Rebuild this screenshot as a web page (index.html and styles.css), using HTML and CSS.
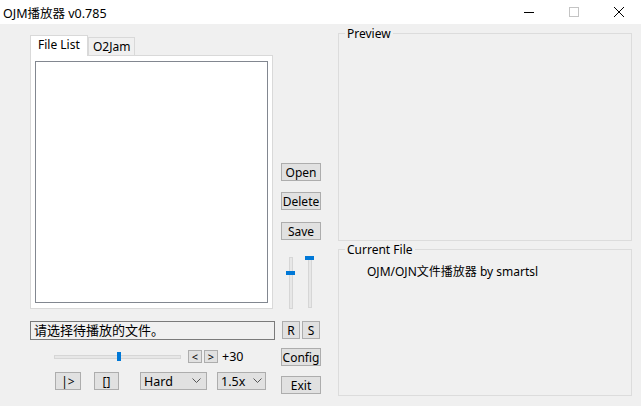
FILE: index.html
```html
<!DOCTYPE html>
<html lang="zh-CN">
<head>
    <meta charset="UTF-8">
    <title>OJM播放器 v0.785</title>
    <link rel="stylesheet" href="styles.css">
</head>
<body>
    <div class="window">
        <div class="titlebar">
            <span class="title">OJM播放器 v0.785</span>
            <div class="controls">
                <span class="ctl"><svg width="10" height="10" viewBox="0 0 10 10"><path d="M0 5.5H10" stroke="#000" stroke-width="1"/></svg></span>
                <span class="ctl"><svg width="10" height="10" viewBox="0 0 10 10"><rect x="0.5" y="0.5" width="9" height="9" fill="none" stroke="#c4c4c4"/></svg></span>
                <span class="ctl"><svg width="10" height="10" viewBox="0 0 10 10"><path d="M0 0L10 10M10 0L0 10" stroke="#000" stroke-width="1"/></svg></span>
            </div>
        </div>

        <div class="main">
            <div class="left">
                <div class="tabs">
                    <div class="tab active">File List</div>
                    <div class="tab">O2Jam</div>
                </div>
                <div class="tab-panel">
                    <div class="listbox"></div>
                </div>
                <div class="status">请选择待播放的文件。</div>
                <div class="seek-row">
                    <div class="hslider"><span class="hthumb"></span></div>
                    <button class="btn small">&lt;</button>
                    <button class="btn small">&gt;</button>
                    <span class="offset">+30</span>
                </div>
                <div class="play-row">
                    <button class="btn play">|&gt;</button>
                    <button class="btn stop">[]</button>
                    <div class="combo level">Hard<svg width="9" height="6" viewBox="0 0 9 6"><path d="M0.5 0.5L4.5 4.5L8.5 0.5" fill="none" stroke="#555"/></svg></div>
                    <div class="combo speed">1.5x<svg width="9" height="6" viewBox="0 0 9 6"><path d="M0.5 0.5L4.5 4.5L8.5 0.5" fill="none" stroke="#555"/></svg></div>
                </div>
            </div>

            <div class="middle">
                <button class="btn side open">Open</button>
                <button class="btn side">Delete</button>
                <button class="btn side save">Save</button>
                <div class="vsliders">
                    <div class="vslider"><span class="vthumb low"></span></div>
                    <div class="vslider"><span class="vthumb"></span></div>
                </div>
                <div class="rs">
                    <button class="btn sq">R</button>
                    <button class="btn sq">S</button>
                </div>
                <button class="btn side config">Config</button>
                <button class="btn side exit">Exit</button>
            </div>

            <div class="right">
                <div class="group preview">
                    <span class="group-title">Preview</span>
                </div>
                <div class="group current">
                    <span class="group-title">Current File</span>
                    <div class="file-info">OJM/OJN文件播放器 by smartsl</div>
                </div>
            </div>
        </div>
    </div>
</body>
</html>
```

FILE: styles.css
```css
body {
    margin: 0;
    background: #f0f0f0;
    font-family: "Noto Sans", "Noto Sans CJK SC", sans-serif;
    font-size: 12px;
    color: #000;
}
.window {
    width: 641px;
    height: 406px;
    overflow: hidden;
}
.titlebar {
    height: 24px;
    background: #fff;
    display: flex;
    align-items: center;
    justify-content: space-between;
}
.title {
    padding-left: 3px;
    font-size: 12.5px;
}
.controls {
    display: flex;
    padding-right: 17px;
}
.ctl {
    width: 45px;
    display: flex;
    justify-content: flex-end;
}
.main {
    display: flex;
    padding-left: 30px;
    height: 382px;
}

/* left column */
.left {
    width: 245px;
}
.tabs {
    display: flex;
    align-items: flex-end;
    margin-top: 11px;
    height: 21px;
    position: relative;
    z-index: 1;
}
.tab {
    height: 18px;
    line-height: 17px;
    padding: 0 4px;
    border: 1px solid #d9d9d9;
    border-bottom: none;
    background: #f0f0f0;
    box-sizing: border-box;
    margin-bottom: 1px;
}
.tab.active {
    width: 58px;
    height: 21px;
    line-height: 18px;
    background: #fff;
    padding: 0 0 0 7px;
    margin-bottom: 0;
}
.tab-panel {
    width: 243px;
    height: 254px;
    margin-top: -1px;
    box-sizing: border-box;
    border: 1px solid #d9d9d9;
    background: #fff;
    padding: 5px 4px;
}
.listbox {
    height: 242px;
    box-sizing: border-box;
    border: 1px solid #828790;
    background: #fff;
}
.status {
    margin-top: 12px;
    height: 19px;
    box-sizing: border-box;
    border: 1px solid #7a7a7a;
    padding-left: 3px;
    line-height: 17px;
    font-size: 13px;
}
.seek-row {
    display: flex;
    align-items: center;
    margin-top: 10px;
    height: 13px;
}
.hslider {
    position: relative;
    width: 127px;
    height: 4px;
    margin-left: 24px;
    margin-right: 7px;
    box-sizing: border-box;
    background: #e7e7e7;
    border: 1px solid #d6d6d6;
}
.hthumb {
    position: absolute;
    left: 62px;
    top: -4px;
    width: 4px;
    height: 9px;
    background: #0078d7;
}
.btn {
    font-family: inherit;
    font-size: 12px;
    color: #000;
    background: #e1e1e1;
    border: 1px solid #adadad;
    box-sizing: border-box;
    padding: 0;
    height: 18px;
    line-height: 15px;
}
.btn.small {
    width: 14px;
    height: 13px;
    line-height: 10px;
    font-size: 11px;
    margin-right: 2px;
}
.offset {
    margin-left: 2px;
    font-size: 12.5px;
}
.play-row {
    display: flex;
    margin-top: 9px;
    align-items: center;
}
.play {
    width: 26px;
    margin-left: 25px;
}
.stop {
    width: 25px;
    margin-left: 13px;
}
.combo {
    height: 18px;
    box-sizing: border-box;
    border: 1px solid #adadad;
    background: #e1e1e1;
    display: flex;
    align-items: center;
    justify-content: space-between;
    padding: 0 5px 0 3px;
    font-size: 12.5px;
}
.level {
    width: 67px;
    margin-left: 21px;
}
.speed {
    width: 49px;
    margin-left: 10px;
    padding-right: 3px;
}

/* middle column */
.middle {
    width: 40px;
    margin-left: 6px;
    display: flex;
    flex-direction: column;
}
.side {
    width: 40px;
    margin-top: 11px;
}
.side.open {
    margin-top: 139px;
}
.side.save {
    margin-top: 12px;
}
.vsliders {
    display: flex;
    height: 53px;
    margin-top: 16px;
}
.vslider {
    position: relative;
    width: 4px;
    height: 52px;
    box-sizing: border-box;
    background: #e7e7e7;
    border: 1px solid #d6d6d6;
    margin-left: 15px;
}
.vslider:first-child {
    margin-left: 8px;
    margin-top: 1px;
}
.vthumb {
    position: absolute;
    left: -4px;
    top: -1px;
    width: 9px;
    height: 4px;
    background: #0078d7;
}
.vthumb.low {
    top: 13px;
}
.rs {
    display: flex;
    gap: 2px;
    margin-top: 12px;
    padding-left: 1px;
}
.btn.sq {
    width: 18px;
}
.side.config {
    margin-top: 9px;
}
.side.exit {
    margin-top: 10px;
}

/* right column */
.right {
    width: 294px;
    margin-left: 17px;
}
.group {
    position: relative;
    box-sizing: border-box;
    border: 1px solid #dcdcdc;
}
.group-title {
    position: absolute;
    top: -8px;
    left: 6px;
    padding: 0 2px;
    background: #f0f0f0;
    line-height: 16px;
}
.preview {
    margin-top: 9px;
    height: 208px;
}
.current {
    margin-top: 8px;
    height: 147px;
}
.file-info {
    padding: 12px 0 0 28px;
    font-size: 12px;
}
```
